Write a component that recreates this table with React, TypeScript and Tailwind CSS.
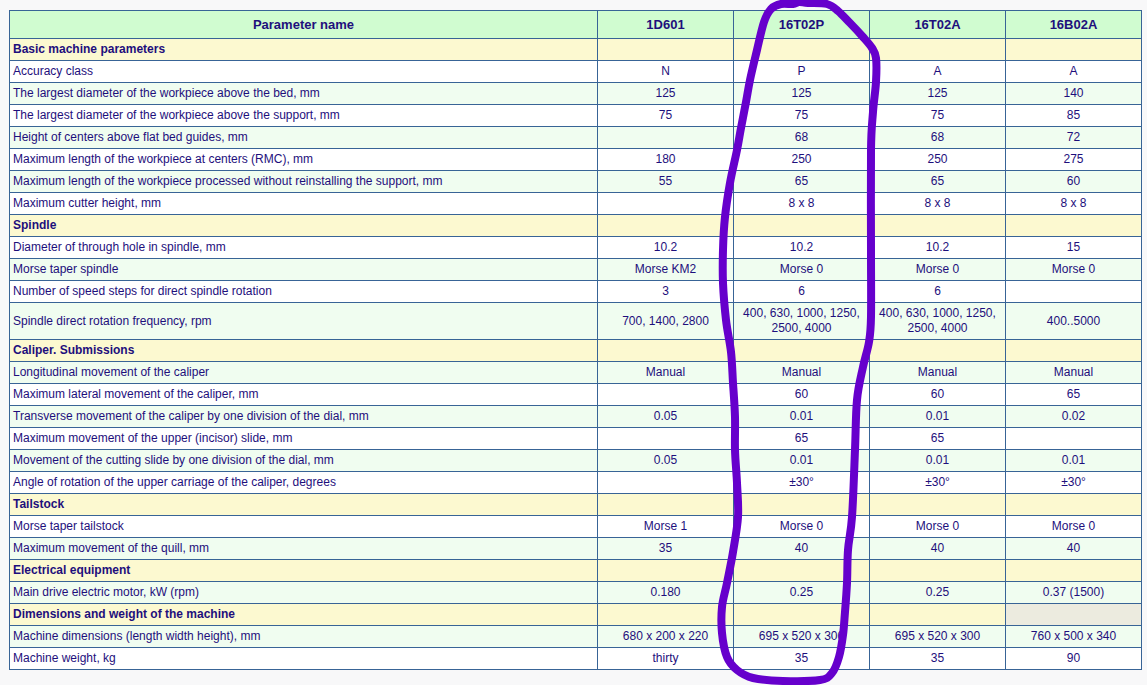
const MODELS = ["1D601", "16T02P", "16T02A", "16B02A"];

type Row =
  | { section: string; grayLast?: boolean }
  | { name: string; values: string[] };

const ROWS: Row[] = [
  { section: "Basic machine parameters" },
  { name: "Accuracy class", values: ["N", "P", "A", "A"] },
  { name: "The largest diameter of the workpiece above the bed, mm", values: ["125", "125", "125", "140"] },
  { name: "The largest diameter of the workpiece above the support, mm", values: ["75", "75", "75", "85"] },
  { name: "Height of centers above flat bed guides, mm", values: ["", "68", "68", "72"] },
  { name: "Maximum length of the workpiece at centers (RMC), mm", values: ["180", "250", "250", "275"] },
  {
    name: "Maximum length of the workpiece processed without reinstalling the support, mm",
    values: ["55", "65", "65", "60"],
  },
  { name: "Maximum cutter height, mm", values: ["", "8 x 8", "8 x 8", "8 x 8"] },
  { section: "Spindle" },
  { name: "Diameter of through hole in spindle, mm", values: ["10.2", "10.2", "10.2", "15"] },
  { name: "Morse taper spindle", values: ["Morse KM2", "Morse 0", "Morse 0", "Morse 0"] },
  { name: "Number of speed steps for direct spindle rotation", values: ["3", "6", "6", ""] },
  {
    name: "Spindle direct rotation frequency, rpm",
    values: [
      "700, 1400, 2800",
      "400, 630, 1000, 1250, 2500, 4000",
      "400, 630, 1000, 1250, 2500, 4000",
      "400..5000",
    ],
  },
  { section: "Caliper. Submissions" },
  { name: "Longitudinal movement of the caliper", values: ["Manual", "Manual", "Manual", "Manual"] },
  { name: "Maximum lateral movement of the caliper, mm", values: ["", "60", "60", "65"] },
  {
    name: "Transverse movement of the caliper by one division of the dial, mm",
    values: ["0.05", "0.01", "0.01", "0.02"],
  },
  { name: "Maximum movement of the upper (incisor) slide, mm", values: ["", "65", "65", ""] },
  { name: "Movement of the cutting slide by one division of the dial, mm", values: ["0.05", "0.01", "0.01", "0.01"] },
  { name: "Angle of rotation of the upper carriage of the caliper, degrees", values: ["", "±30°", "±30°", "±30°"] },
  { section: "Tailstock" },
  { name: "Morse taper tailstock", values: ["Morse 1", "Morse 0", "Morse 0", "Morse 0"] },
  { name: "Maximum movement of the quill, mm", values: ["35", "40", "40", "40"] },
  { section: "Electrical equipment" },
  { name: "Main drive electric motor, kW (rpm)", values: ["0.180", "0.25", "0.25", "0.37 (1500)"] },
  { section: "Dimensions and weight of the machine", grayLast: true },
  {
    name: "Machine dimensions (length width height), mm",
    values: ["680 x 200 x 220", "695 x 520 x 300", "695 x 520 x 300", "760 x 500 x 340"],
  },
  { name: "Machine weight, kg", values: ["thirty", "35", "35", "90"] },
];

// hand-drawn marker loop around the 16T02P column
const LOOP: [number, number][] = [
  [750, 80], [757, 50], [764, 22], [771, 9], [781, 4], [793, 4], [799, 2], [808, 3], [827, 4],
  [838, 11], [850, 23], [863, 37], [872, 48], [876, 58], [876, 82], [873, 112], [871, 150],
  [871, 250], [871, 317], [869, 342], [863, 367], [857, 400], [855, 450], [852, 517], [848, 550],
  [847, 583], [845, 612], [843, 635], [839, 657], [832, 673], [820, 680], [783, 681], [753, 678],
  [737, 670], [727, 657], [722, 633], [722, 607], [727, 583], [733, 552], [738, 517], [737, 483],
  [735, 450], [735, 417], [733, 383], [731, 352], [726, 320], [723, 283], [723, 250], [725, 217],
  [730, 183], [737, 150], [741, 128], [746, 102],
];

function smoothPath(pts: [number, number][]) {
  const n = pts.length;
  let d = `M ${pts[0][0]} ${pts[0][1]}`;
  for (let i = 0; i < n; i++) {
    const p0 = pts[(i - 1 + n) % n];
    const p1 = pts[i];
    const p2 = pts[(i + 1) % n];
    const p3 = pts[(i + 2) % n];
    const c1x = p1[0] + (p2[0] - p0[0]) / 6;
    const c1y = p1[1] + (p2[1] - p0[1]) / 6;
    const c2x = p2[0] - (p3[0] - p1[0]) / 6;
    const c2y = p2[1] - (p3[1] - p1[1]) / 6;
    d += ` C ${c1x.toFixed(1)} ${c1y.toFixed(1)}, ${c2x.toFixed(1)} ${c2y.toFixed(1)}, ${p2[0]} ${p2[1]}`;
  }
  return d + " Z";
}

const cell = "border border-[#386496] px-[3px] py-[3px] leading-[15px] align-middle";

export default function App() {
  return (
    <div
      className="relative min-h-[685px] w-[1147px] bg-[#f8f8f9] pt-[10px] pl-[9px] text-[#1e0f7c]"
      style={{ fontFamily: '"Liberation Sans", Arial, sans-serif' }}
    >
      <table className="w-[1132px] table-fixed border-collapse text-[12px]">
        <colgroup>
          <col className="w-[588px]" />
          <col className="w-[136px]" />
          <col className="w-[136px]" />
          <col className="w-[136px]" />
          <col className="w-[136px]" />
        </colgroup>
        <thead>
          <tr className="bg-[#d0fcd0]">
            <th className={`${cell} py-[6px] text-center text-[13px] font-bold`}>Parameter name</th>
            {MODELS.map((m) => (
              <th key={m} className={`${cell} py-[6px] text-center text-[13px] font-bold`}>
                {m}
              </th>
            ))}
          </tr>
        </thead>
        <tbody>
          {ROWS.map((r, i) => {
            if ("section" in r) {
              return (
                <tr key={i} className="bg-[#fcf9d0]">
                  <td className={`${cell} text-left font-bold`}>{r.section}</td>
                  <td className={cell} />
                  <td className={cell} />
                  <td className={cell} />
                  <td className={`${cell} ${r.grayLast ? "bg-[#ecebdf]" : ""}`} />
                </tr>
              );
            }
            const bg = i % 2 === 0 ? "bg-[#f0fdf0]" : "bg-white";
            return (
              <tr key={i} className={bg}>
                <td className={`${cell} text-left`}>{r.name}</td>
                {r.values.map((v, j) => (
                  <td key={j} className={`${cell} text-center`}>
                    {v}
                  </td>
                ))}
              </tr>
            );
          })}
        </tbody>
      </table>

      <svg
        className="pointer-events-none absolute left-0 top-0"
        width={1147}
        height={685}
        viewBox="0 0 1147 685"
      >
        <path
          d={smoothPath(LOOP)}
          fill="none"
          stroke="#6600cc"
          strokeWidth={8}
          strokeLinecap="round"
          strokeLinejoin="round"
        />
      </svg>
    </div>
  );
}
